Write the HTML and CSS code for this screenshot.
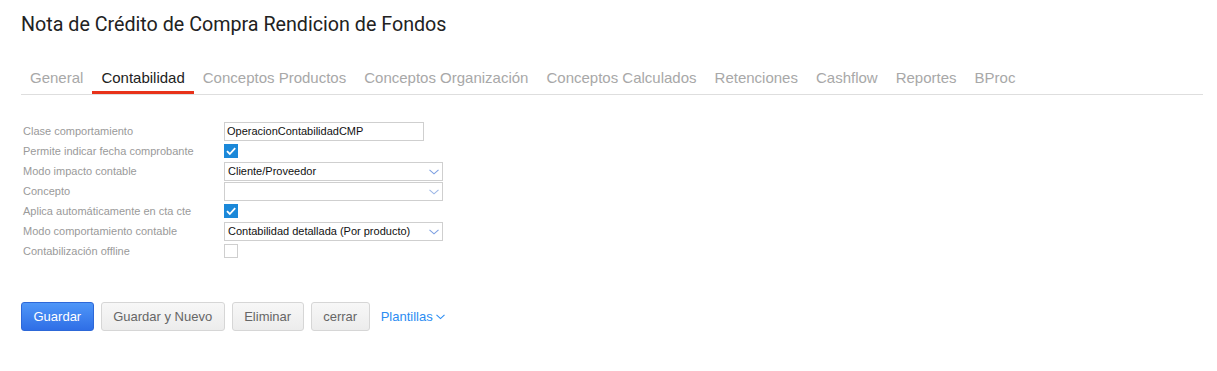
FILE: index.html
```html
<!DOCTYPE html>
<html>
<head>
<meta name="viewport" content="width=device-width, initial-scale=1">
<title>Nota de Crédito de Compra</title>
<link rel="stylesheet" href="styles.css">
</head>
<body>

<div class="page">
  <h1 class="title">Nota de Crédito de Compra Rendicion de Fondos</h1>

  <ul class="tabs">
    <li>General</li>
    <li class="active">Contabilidad</li>
    <li>Conceptos Productos</li>
    <li>Conceptos Organización</li>
    <li>Conceptos Calculados</li>
    <li>Retenciones</li>
    <li>Cashflow</li>
    <li>Reportes</li>
    <li>BProc</li>
  </ul>

  <div class="form">
    <div class="row">
      <label>Clase comportamiento</label>
      <div class="text-field">OperacionContabilidadCMP</div>
    </div>
    <div class="row">
      <label>Permite indicar fecha comprobante</label>
      <span class="check on"><svg width="14" height="14" viewBox="0 0 14 14"><polyline points="3,7.2 5.8,10 11.2,4.2" fill="none" stroke="#fff" stroke-width="1.8"/></svg></span>
    </div>
    <div class="row">
      <label>Modo impacto contable</label>
      <div class="select"><span>Cliente/Proveedor</span><svg width="10" height="6" viewBox="0 0 10 6"><polyline points="0.5,0.8 5,4.8 9.5,0.8" fill="none" stroke="#7c9fe2" stroke-width="1.1"/></svg></div>
    </div>
    <div class="row">
      <label>Concepto</label>
      <div class="select"><span></span><svg width="10" height="6" viewBox="0 0 10 6"><polyline points="0.5,0.8 5,4.8 9.5,0.8" fill="none" stroke="#9cb6e6" stroke-width="1.1"/></svg></div>
    </div>
    <div class="row">
      <label>Aplica automáticamente en cta cte</label>
      <span class="check on"><svg width="14" height="14" viewBox="0 0 14 14"><polyline points="3,7.2 5.8,10 11.2,4.2" fill="none" stroke="#fff" stroke-width="1.8"/></svg></span>
    </div>
    <div class="row">
      <label>Modo comportamiento contable</label>
      <div class="select"><span>Contabilidad detallada (Por producto)</span><svg width="10" height="6" viewBox="0 0 10 6"><polyline points="0.5,0.8 5,4.8 9.5,0.8" fill="none" stroke="#7c9fe2" stroke-width="1.1"/></svg></div>
    </div>
    <div class="row">
      <label>Contabilización offline</label>
      <span class="check"></span>
    </div>
  </div>

  <div class="actions">
    <button class="btn primary">Guardar</button>
    <button class="btn">Guardar y Nuevo</button>
    <button class="btn">Eliminar</button>
    <button class="btn">cerrar</button>
    <a class="link">Plantillas <svg width="9" height="6" viewBox="0 0 9 6"><polyline points="0.5,0.8 4.5,4.6 8.5,0.8" fill="none" stroke="#2b8cf2" stroke-width="1.1"/></svg></a>
  </div>
</div>

</body>
</html>
```

FILE: styles.css
```css
body {
  margin: 0;
  background: #fff;
  font-family: "Liberation Sans", Arial, sans-serif;
}

* {
  box-sizing: border-box;
}

.page {
  padding: 13px 14px 0 21px;
}

/* Page title */
.title {
  margin: 0;
  font-family: Roboto, "Liberation Sans", sans-serif;
  font-weight: 400;
  font-size: 19.7px;
  line-height: 24px;
  color: #222;
}

/* Tabs */
.tabs {
  display: flex;
  margin: 32px 0 0 0;
  padding: 0;
  list-style: none;
  border-bottom: 1px solid #dedede;
}

.tabs li {
  padding: 0 9px 5px 9px;
  font-size: 15px;
  line-height: 17px;
  color: #a8a8a8;
  border-bottom: 3px solid transparent;
  cursor: pointer;
}

.tabs li.active {
  color: #222;
  border-bottom-color: #e8321a;
}

/* Form rows */
.form {
  margin-top: 26px;
}

.row {
  display: flex;
  align-items: center;
  height: 20px;
}

.row label {
  width: 203px;
  padding-left: 2px;
  font-size: 11px;
  color: #9a9a9a;
}

.text-field {
  width: 200px;
  height: 19px;
  border: 1px solid #cfcfcf;
  padding-left: 2px;
  font-size: 11px;
  line-height: 17px;
  color: #111;
}

.select {
  display: flex;
  align-items: center;
  justify-content: space-between;
  width: 219px;
  height: 19px;
  border: 1px solid #cfcfcf;
  padding: 0 3px 0 3px;
  font-size: 11px;
  color: #111;
}

.select svg {
  margin-top: 1px;
}

.check {
  display: block;
  width: 14px;
  height: 14px;
  border: 1px solid #cfcfcf;
  background: #fff;
}

.check.on {
  border: none;
  background: #1b88d9;
}

.check svg {
  display: block;
}

/* Buttons */
.actions {
  display: flex;
  align-items: center;
  gap: 7px;
  margin-top: 41px;
}

.btn {
  height: 29px;
  padding: 0 11.5px;
  font-family: "Liberation Sans", Arial, sans-serif;
  font-size: 13px;
  color: #666;
  background: linear-gradient(#f7f7f7, #ececec);
  border: 1px solid #d6d6d6;
  border-radius: 3px;
  cursor: pointer;
}

.btn.primary {
  color: #fff;
  background: linear-gradient(#4f97f8, #2f6ee6);
  border-color: #2d68d8;
}

.link {
  margin-left: 4px;
  font-size: 13px;
  color: #2b8cf2;
  cursor: pointer;
}

.link svg {
  vertical-align: 1px;
}
```
